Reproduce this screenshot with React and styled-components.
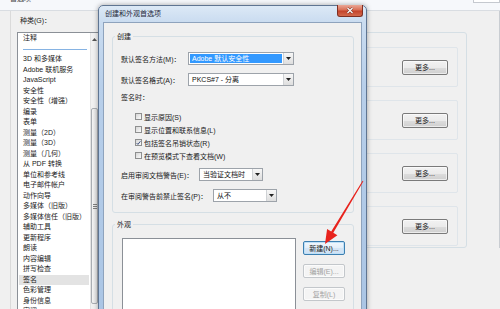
import React from 'react';
import styled, { createGlobalStyle } from 'styled-components';

const GlobalStyle = createGlobalStyle`
  html, body {
    margin: 0;
    padding: 0;
    background: #f0f0f0;
  }
  body {
    width: 500px;
    height: 309px;
    overflow: hidden;
    font-family: "Liberation Sans", "Noto Sans CJK SC", sans-serif;
    font-size: 7px;
    color: #1a1a1a;
  }
  * { box-sizing: border-box; }
`;

const Screen = styled.div`
  position: relative;
  width: 500px;
  height: 309px;
  overflow: hidden;
  background: #f0f0f0;
`;

/* ---------- main preferences window (behind) ---------- */

const MainWindow = styled.div`
  display: flex;
  flex-direction: column;
  height: 100%;
`;

const MainTitle = styled.div`
  height: 11px;
  display: flex;
  align-items: flex-end;
  padding-left: 10px;
  background: #f6f8fb;
  border-bottom: 1px solid #d9dde2;
  overflow: hidden;
`;

const MainTitleText = styled.span`
  line-height: 10px;
  margin-bottom: 6px;
  color: #444;
`;

const SearchStub = styled.div`
  margin-left: auto;
  width: 27px;
  height: 10px;
  margin-bottom: 7px;
  border: 1px solid #c5c9cf;
  background: #fff;
`;

const MainBody = styled.div`
  flex: 1;
  min-height: 0;
  display: flex;
  margin-left: 10px;
  border-left: 1px solid #dadada;
  overflow: hidden;
`;

const CategoryPane = styled.div`
  width: 88px;
  flex: none;
  display: flex;
  flex-direction: column;
  padding-left: 6px;
`;

const PaneLabel = styled.div`
  line-height: 10px;
  margin: 5px 0 0 3px;
`;

const CategoryList = styled.div`
  margin-top: 6px;
  width: 82px;
  height: 290px;
  flex: none;
  display: flex;
  border: 1px solid #8b9097;
  background: #fff;
`;

const Rows = styled.div`
  flex: 1;
  padding: 0 1px;
  overflow: hidden;
`;

const Row = styled.div`
  height: 10.5px;
  line-height: 10.5px;
  padding-left: 4px;
  white-space: nowrap;
  background: ${p => (p.$selected ? '#e3e3e3' : 'transparent')};
`;

const Separator = styled.div`
  height: 10.5px;
  display: flex;
  align-items: center;
  padding: 1px 2px 0 4px;

  &::after {
    content: '';
    flex: 1;
    height: 1px;
    background: #86b3e3;
  }
`;

const Scrollbar = styled.div`
  width: 8px;
  flex: none;
  display: flex;
  flex-direction: column;
  background: #f1f1f1;
  border-left: 1px solid #e4e4e4;
`;

const ScrollArrow = styled.div`
  height: 12px;
  display: flex;
  align-items: center;
  justify-content: center;
`;

const Thumb = styled.div`
  margin-top: ${p => p.$offset}px;
  height: ${p => p.$size}px;
  border: 1px solid #a9adb2;
  border-radius: 2px;
  background: linear-gradient(90deg, #f5f5f5, #dedede);
  display: flex;
  align-items: center;
  justify-content: center;
`;

const Grip = styled.div`
  width: 4px;
  height: 5px;
  background: repeating-linear-gradient(180deg, #7d7d7d 0 1px, transparent 1px 2px);
`;

const SettingsPane = styled.div`
  flex: 1;
  align-self: flex-start;
  height: 237px;
  border-right: 1px solid #c9cdd2;
`;

const SettingsGroup = styled.div`
  margin: 21px 32px 0 15px;
  padding: 14px 8px 1px;
  border: 1px solid #d5dfe5;
  border-radius: 3px;
  display: flex;
  flex-direction: column;
  gap: 13px;
`;

const SettingsPanel = styled.div`
  height: 40px;
  display: flex;
  align-items: center;
  justify-content: flex-end;
  padding-right: 9px;
  border: 1px solid #dfe5ea;
  border-radius: 2px;
`;

/* ---------- shared controls ---------- */

const PushButton = styled.button`
  width: ${p => p.$width}px;
  height: ${p => p.$height}px;
  padding: 0;
  font: inherit;
  font-size: 7px;
  line-height: 1;
  border-radius: 2px;
  border: 1px solid ${p => (p.$tone === 'focus' ? '#3c7fb1' : p.$tone === 'off' ? '#c3c7cb' : '#7a7a7a')};
  color: ${p => (p.$tone === 'off' ? '#a3a3a3' : '#1a1a1a')};
  background: ${p =>
    p.$tone === 'focus'
      ? 'linear-gradient(180deg, #f1f7fd 0%, #e3eef9 50%, #d4e5f5 51%, #cfe2f4 100%)'
      : p.$tone === 'off'
      ? '#f4f4f4'
      : 'linear-gradient(180deg, #f2f2f2 0%, #ebebeb 50%, #dddddd 51%, #cfcfcf 100%)'};
  box-shadow: ${p => (p.$tone === 'focus' ? 'inset 0 0 0 1px #bfe0f7' : 'inset 0 0 0 1px rgba(255,255,255,.6)')};
`;

/* ---------- dialog ---------- */

const Dialog = styled.section`
  position: absolute;
  left: 98px;
  top: 5px;
  width: 269px;
  height: 330px;
  display: flex;
  flex-direction: column;
  padding: 0 4px;
  border: 1px solid #5f7592;
  border-radius: 5px 5px 0 0;
  background: linear-gradient(180deg, #dce9f6 0, #cadcf0 16px, #b8cfea 80px, #a9c4e4 100%);
  box-shadow: 0 0 5px rgba(0, 0, 0, 0.35);
`;

const TitleBar = styled.div`
  height: 16px;
  flex: none;
  display: flex;
  align-items: center;
  justify-content: space-between;
`;

const DialogTitle = styled.span`
  margin-left: 2px;
  line-height: 10px;
  color: #1e2838;
`;

const CloseButton = styled.div`
  align-self: flex-start;
  width: 26px;
  height: 12px;
  margin: -1px -1px 0 0;
  display: flex;
  align-items: center;
  justify-content: center;
  border: 1px solid #7f2f22;
  border-top: none;
  border-radius: 0 0 3px 3px;
  background: linear-gradient(180deg, #eaa897 0%, #d96f55 45%, #c4432b 55%, #d3694b 100%);
`;

const Client = styled.div`
  flex: 1;
  display: flex;
  flex-direction: column;
  padding: 0 7px 0 8px;
  background: #f0f0f0;
  border: 1px solid #8ea3bd;
`;

const GroupBox = styled.fieldset`
  margin: ${p => p.$top}px 0 0;
  padding: 0;
  min-width: 0;
  border: 1px solid #d5dfe5;
  border-radius: 3px;
`;

const Caption = styled.legend`
  margin-left: 2px;
  padding: 0 2px;
  line-height: 11px;
  font-size: 7px;
`;

const GroupBody = styled.div`
  padding: 10px 0 10px 8px;
  display: flex;
  flex-direction: column;
`;

const FieldRow = styled.div`
  display: flex;
  align-items: center;
  height: 13px;
  margin-top: ${p => p.$gap || 0}px;
`;

const FieldLabel = styled.span`
  width: ${p => p.$width}px;
  flex: none;
  white-space: nowrap;
`;

const Heading = styled.div`
  line-height: 10px;
  margin-top: 7px;
`;

const CheckList = styled.div`
  margin: 7px 0 0 14px;
  display: flex;
  flex-direction: column;
`;

const CheckRow = styled.label`
  height: 13px;
  display: flex;
  align-items: center;
  gap: 2px;
  white-space: nowrap;
`;

const Box = styled.span`
  width: 7px;
  height: 7px;
  flex: none;
  display: flex;
  align-items: center;
  justify-content: center;
  border: 1px solid #8e8f8f;
  background: linear-gradient(135deg, #d6d6d6, #fbfbfb);
`;

const Combo = styled.div`
  width: ${p => p.$width}px;
  height: 13px;
  flex: none;
  display: flex;
  border: 1px solid #9da3aa;
  background: #fff;
`;

const ComboValue = styled.span`
  flex: 1;
  margin: 1px;
  padding-left: 2px;
  line-height: 9px;
  white-space: nowrap;
  overflow: hidden;
  background: ${p => (p.$active ? '#3399ff' : 'transparent')};
  color: ${p => (p.$active ? '#fff' : '#111')};
`;

const ComboArrow = styled.span`
  width: 10px;
  flex: none;
  display: flex;
  align-items: center;
  justify-content: center;
  border-left: 1px solid #cfd2d5;
  background: linear-gradient(180deg, #f7f7f7, #dedede);
`;

const AppearanceBody = styled.div`
  padding: 8px 0 0 9px;
  display: flex;
`;

const StyleList = styled.div`
  width: 174px;
  height: 80px;
  flex: none;
  border: 1px solid #8b9097;
  background: #fff;
`;

const ButtonColumn = styled.div`
  margin-left: 7px;
  padding-top: 3px;
  display: flex;
  flex-direction: column;
  gap: 9px;
`;

const Callout = styled.svg`
  position: absolute;
  left: 0;
  top: 0;
  width: 500px;
  height: 309px;
  pointer-events: none;
`;

const categories = [
  '注释', null, '3D 和多媒体', 'Adobe 联机服务', 'JavaScript', '安全性', '安全性（增强）',
  '编录', '表单', '测量（2D）', '测量（3D）', '测量（几何）', '从 PDF 转换', '单位和参考线',
  '电子邮件帐户', '动作向导', '多媒体（旧版）', '多媒体信任（旧版）', '辅助工具', '更新程序',
  '朗读', '内容编辑', '拼写检查', '签名', '色彩管理', '身份信息', '审阅',
];

const options = [
  { text: '显示原因(S)', checked: false },
  { text: '显示位置和联系信息(L)', checked: false },
  { text: '包括签名吊销状态(R)', checked: true },
  { text: '在预览模式下查看文档(W)', checked: false },
];

const DownArrow = () => (
  <svg width="5" height="3" viewBox="0 0 5 3">
    <path d="M0 0H5L2.5 3Z" fill="#222" />
  </svg>
);

const Select = ({ width, value, active }) => (
  <Combo $width={width}>
    <ComboValue $active={active}>{value}</ComboValue>
    <ComboArrow><DownArrow /></ComboArrow>
  </Combo>
);

const Check = ({ checked }) => (
  <Box>
    {checked && (
      <svg width="6" height="6" viewBox="0 0 6 6">
        <path d="M0.8 3.1L2.3 4.7L5.3 0.9" fill="none" stroke="#2d4274" strokeWidth="1.1" />
      </svg>
    )}
  </Box>
);

export default function App() {
  return (
    <Screen>
      <GlobalStyle />
      <MainWindow>
        <MainTitle>
          <MainTitleText>首选项</MainTitleText>
          <SearchStub />
        </MainTitle>
        <MainBody>
          <CategoryPane>
            <PaneLabel>种类(G)：</PaneLabel>
            <CategoryList>
              <Rows>
                {categories.map((c, i) =>
                  c === null ? <Separator key={i} /> : <Row key={i} $selected={c === '签名'}>{c}</Row>
                )}
              </Rows>
              <Scrollbar>
                <ScrollArrow>
                  <svg width="5" height="3" viewBox="0 0 5 3">
                    <path d="M0 3H5L2.5 0Z" fill="#555" />
                  </svg>
                </ScrollArrow>
                <Thumb $offset={63} $size={196}><Grip /></Thumb>
              </Scrollbar>
            </CategoryList>
          </CategoryPane>
          <SettingsPane>
            <SettingsGroup>
              {[0, 1, 2, 3].map(i => (
                <SettingsPanel key={i}>
                  <PushButton $width={46} $height={15}>更多...</PushButton>
                </SettingsPanel>
              ))}
            </SettingsGroup>
          </SettingsPane>
        </MainBody>
      </MainWindow>

      <Dialog>
        <TitleBar>
          <DialogTitle>创建和外观首选项</DialogTitle>
          <CloseButton>
            <svg width="8" height="7" viewBox="0 0 8 7">
              <path d="M1.5 1L6.5 6M6.5 1L1.5 6" stroke="#6d2a1f" strokeWidth="2.4" />
              <path d="M1.5 1L6.5 6M6.5 1L1.5 6" stroke="#fff" strokeWidth="1.3" />
            </svg>
          </CloseButton>
        </TitleBar>
        <Client>
          <GroupBox $top={8}>
            <Caption>创建</Caption>
            <GroupBody>
              <FieldRow>
                <FieldLabel $width={67}>默认签名方法(M)：</FieldLabel>
                <Select width={106} value="Adobe 默认安全性" active />
              </FieldRow>
              <FieldRow $gap={8}>
                <FieldLabel $width={67}>默认签名格式(A)：</FieldLabel>
                <Select width={106} value="PKCS#7 - 分离" />
              </FieldRow>
              <Heading>签名时：</Heading>
              <CheckList>
                {options.map(o => (
                  <CheckRow key={o.text}>
                    <Check checked={o.checked} />
                    {o.text}
                  </CheckRow>
                ))}
              </CheckList>
              <FieldRow $gap={6}>
                <FieldLabel $width={78}>启用审阅文档警告(E)：</FieldLabel>
                <Select width={64} value="当验证文档时" />
              </FieldRow>
              <FieldRow $gap={8}>
                <FieldLabel $width={92}>在审阅警告前禁止签名(P)：</FieldLabel>
                <Select width={64} value="从不" />
              </FieldRow>
            </GroupBody>
          </GroupBox>
          <GroupBox $top={6}>
            <Caption>外观</Caption>
            <AppearanceBody>
              <StyleList />
              <ButtonColumn>
                <PushButton $width={42} $height={14} $tone="focus">新建(N)...</PushButton>
                <PushButton $width={42} $height={14} $tone="off" disabled>编辑(E)...</PushButton>
                <PushButton $width={42} $height={14} $tone="off" disabled>复制(L)</PushButton>
              </ButtonColumn>
            </AppearanceBody>
          </GroupBox>
        </Client>
      </Dialog>

      <Callout viewBox="0 0 500 309">
        <polygon
          points="363.4,181.3 333.3,232.7 337.4,235.2 325,244 327.1,228.9 331.2,231.4 362.6,180.7"
          fill="#e8231d"
        />
      </Callout>
    </Screen>
  );
}
